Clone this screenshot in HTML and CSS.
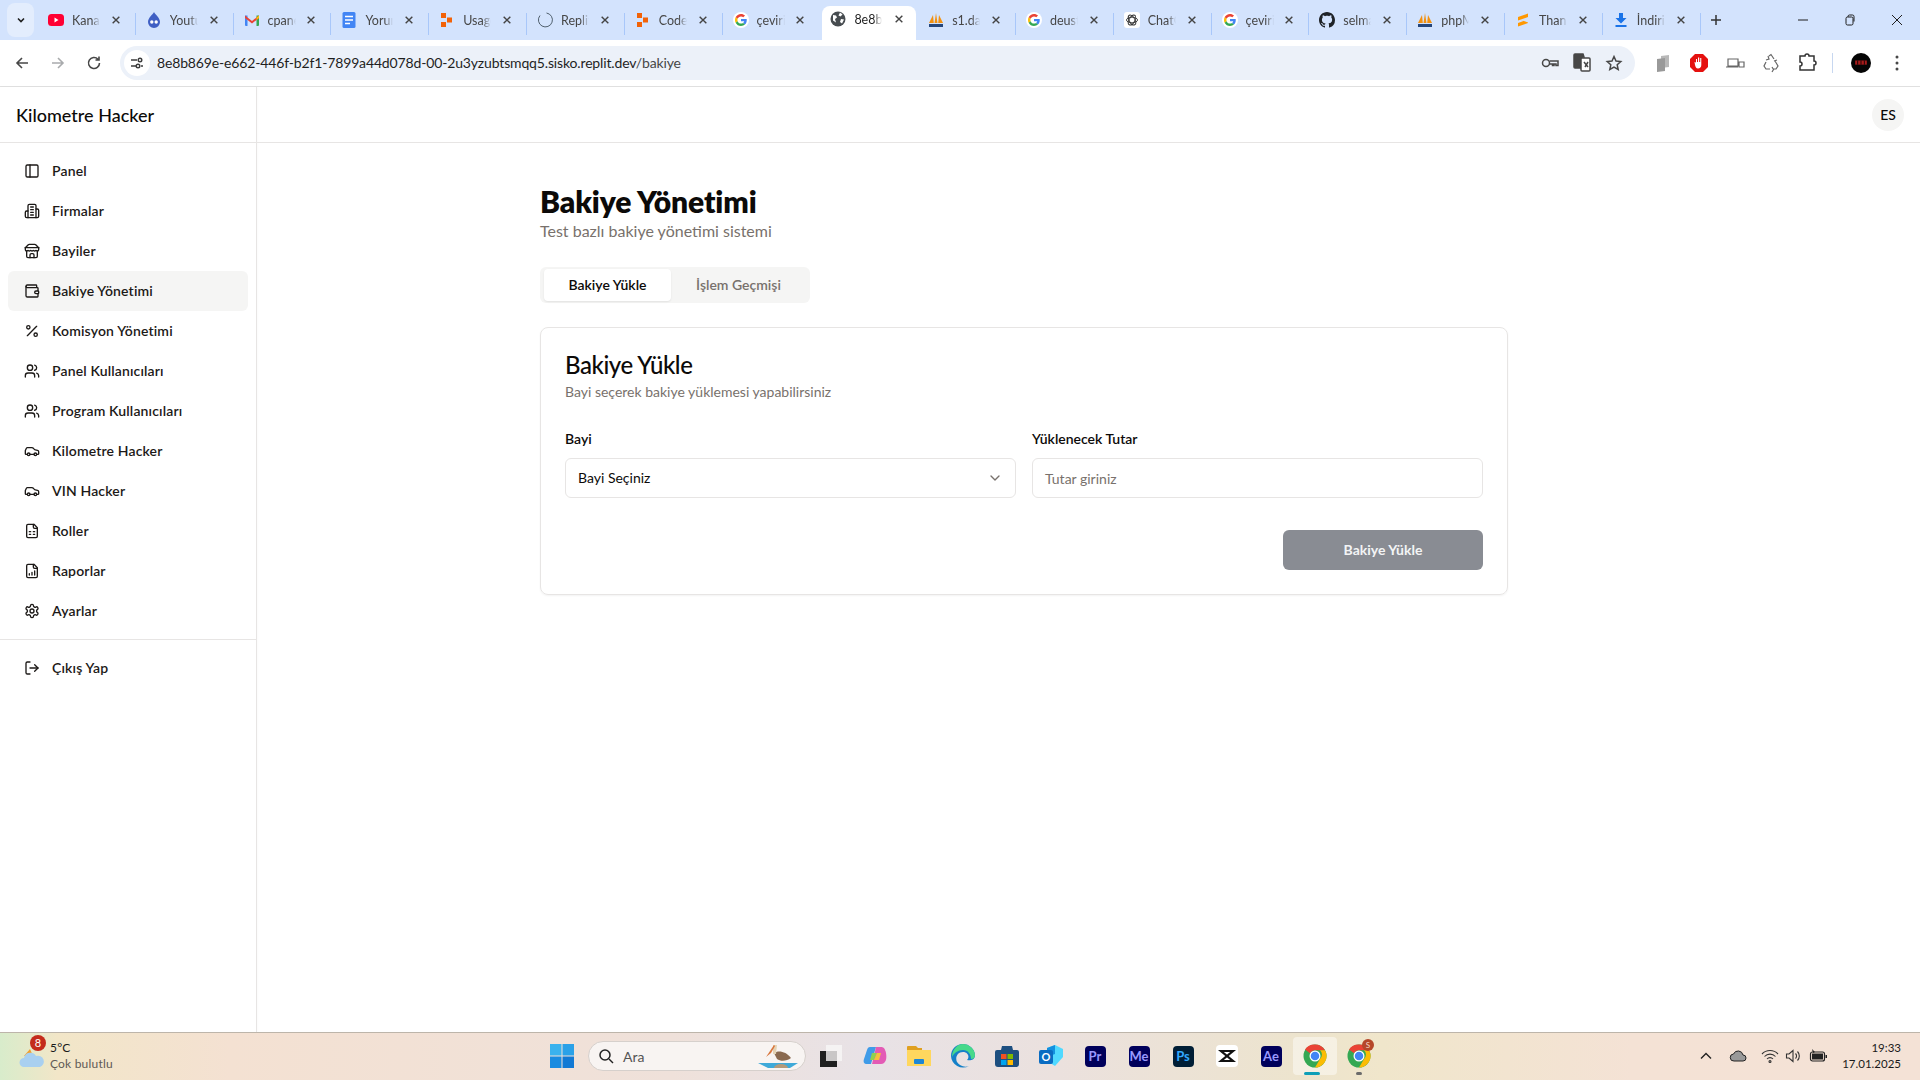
FILE: index.html
```html
<!DOCTYPE html>
<html lang="tr">
<head>
<meta charset="utf-8">
<title>Bakiye Yönetimi</title>
<link rel="stylesheet" href="styles.css">
</head>
<body>
<svg class="defs" width="0" height="0" aria-hidden="true">
  <symbol id="x" viewBox="0 0 12 12"><path d="M2 2l8 8M10 2l-8 8"/></symbol>
  <symbol id="g" viewBox="0 0 48 48">
    <path fill="#EA4335" d="M24 9.5c3.54 0 6.71 1.22 9.21 3.6l6.85-6.85C35.9 2.38 30.47 0 24 0 14.62 0 6.51 5.38 2.56 13.22l7.98 6.19C12.43 13.72 17.74 9.5 24 9.5z"/>
    <path fill="#4285F4" d="M46.98 24.55c0-1.57-.15-3.09-.38-4.55H24v9.02h12.94c-.58 2.96-2.26 5.48-4.78 7.18l7.73 6c4.51-4.18 7.09-10.36 7.09-17.65z"/>
    <path fill="#FBBC05" d="M10.53 28.59c-.5-1.45-.78-2.99-.78-4.59s.27-3.14.78-4.59l-7.98-6.19C.92 16.46 0 20.12 0 24c0 3.88.92 7.54 2.56 10.78l7.97-6.19z"/>
    <path fill="#34A853" d="M24 48c6.48 0 11.93-2.13 15.89-5.81l-7.73-6c-2.15 1.45-4.92 2.3-8.16 2.3-6.26 0-11.57-4.22-13.47-9.91l-7.98 6.19C6.51 42.62 14.62 48 24 48z"/>
  </symbol>
  <symbol id="squares" viewBox="0 0 16 16"><path fill="#f26207" d="M2 1h5v5H2zM2 10h5v5H2zM8 5.500h5v5H8z"/></symbol>
  <symbol id="pma" viewBox="0 0 16 16"><path fill="#f29111" d="M1 11L5 3l.8 8zM6.500 11L8 1l1.500 10zM10.200 11L11 3l4 8z"/><path fill="#25477d" d="M1 12h14v3H1z"/></symbol>
  <symbol id="chrome" viewBox="0 0 48 48">
    <circle cx="24" cy="24" r="23" fill="#34a853"/>
    <path fill="#ea4335" d="M24 1a23 23 0 0 1 20 11.500H24a11.500 11.500 0 0 0-10 5.750L4 11A23 23 0 0 1 24 1z"/>
    <path fill="#fbbc05" d="M44 12.500A23 23 0 0 1 24 47l10-17.250a11.500 11.500 0 0 0 0-17.250z"/>
    <circle cx="24" cy="24" r="11" fill="#fff"/><circle cx="24" cy="24" r="8.500" fill="#4285f4"/>
  </symbol>
  <symbol id="i-panel" viewBox="0 0 24 24"><rect x="3" y="3" width="18" height="18" rx="2"/><path d="M9 3v18"/></symbol>
  <symbol id="i-building" viewBox="0 0 24 24"><path d="M6 22V4a2 2 0 0 1 2-2h8a2 2 0 0 1 2 2v18Z"/><path d="M6 12H4a2 2 0 0 0-2 2v6a2 2 0 0 0 2 2h2"/><path d="M18 9h2a2 2 0 0 1 2 2v9a2 2 0 0 1-2 2h-2"/><path d="M10 6h4M10 10h4M10 14h4M10 18h4"/></symbol>
  <symbol id="i-store" viewBox="0 0 24 24"><path d="m2 7 4.410-4.410A2 2 0 0 1 7.830 2h8.340a2 2 0 0 1 1.420.590L22 7"/><path d="M4 12v8a2 2 0 0 0 2 2h12a2 2 0 0 0 2-2v-8"/><path d="M15 22v-4a2 2 0 0 0-2-2h-2a2 2 0 0 0-2 2v4"/><path d="M2 7h20"/><path d="M22 7v3a2 2 0 0 1-2 2 2.700 2.700 0 0 1-1.590-.630.700.700 0 0 0-.820 0A2.700 2.700 0 0 1 16 12a2.700 2.700 0 0 1-1.590-.630.700.700 0 0 0-.820 0A2.700 2.700 0 0 1 12 12a2.700 2.700 0 0 1-1.590-.630.700.700 0 0 0-.820 0A2.700 2.700 0 0 1 8 12a2.700 2.700 0 0 1-1.590-.630.700.700 0 0 0-.820 0A2.700 2.700 0 0 1 4 12a2 2 0 0 1-2-2V7"/></symbol>
  <symbol id="i-wallet" viewBox="0 0 24 24"><path d="M19 7V4a1 1 0 0 0-1-1H5a2 2 0 0 0 0 4h15a1 1 0 0 1 1 1v4h-3a2 2 0 0 0 0 4h3a1 1 0 0 0 1-1v-2a1 1 0 0 0-1-1"/><path d="M3 5v14a2 2 0 0 0 2 2h15a1 1 0 0 0 1-1v-4"/></symbol>
  <symbol id="i-percent" viewBox="0 0 24 24"><path d="M19 5 5 19"/><circle cx="6.500" cy="6.500" r="2.500"/><circle cx="17.500" cy="17.500" r="2.500"/></symbol>
  <symbol id="i-users" viewBox="0 0 24 24"><path d="M16 21v-2a4 4 0 0 0-4-4H6a4 4 0 0 0-4 4v2"/><circle cx="9" cy="7" r="4"/><path d="M22 21v-2a4 4 0 0 0-3-3.870"/><path d="M16 3.130a4 4 0 0 1 0 7.750"/></symbol>
  <symbol id="i-car" viewBox="0 0 24 24"><path d="M19 17h2c.600 0 1-.400 1-1v-3c0-.900-.700-1.700-1.500-1.900C18.700 10.600 16 10 16 10s-1.300-1.400-2.200-2.300c-.500-.400-1.100-.700-1.800-.700H5c-.600 0-1.100.400-1.400.900l-1.400 2.900A3.700 3.700 0 0 0 2 12v4c0 .600.400 1 1 1h2"/><circle cx="7" cy="17" r="2"/><path d="M9 17h6"/><circle cx="17" cy="17" r="2"/></symbol>
  <symbol id="i-filegrid" viewBox="0 0 24 24"><path d="M15 2H6a2 2 0 0 0-2 2v16a2 2 0 0 0 2 2h12a2 2 0 0 0 2-2V7Z"/><path d="M14 2v4a2 2 0 0 0 2 2h4"/><path d="M8 13h2M14 13h2M8 17h2M14 17h2"/></symbol>
  <symbol id="i-filebar" viewBox="0 0 24 24"><path d="M15 2H6a2 2 0 0 0-2 2v16a2 2 0 0 0 2 2h12a2 2 0 0 0 2-2V7Z"/><path d="M14 2v4a2 2 0 0 0 2 2h4"/><path d="M8 18v-2M12 18v-4M16 18v-6"/></symbol>
  <symbol id="i-gear" viewBox="0 0 24 24"><path d="M12.220 2h-.440a2 2 0 0 0-2 2v.180a2 2 0 0 1-1 1.730l-.430.250a2 2 0 0 1-2 0l-.150-.080a2 2 0 0 0-2.730.730l-.220.380a2 2 0 0 0 .730 2.730l.150.100a2 2 0 0 1 1 1.720v.510a2 2 0 0 1-1 1.740l-.150.090a2 2 0 0 0-.730 2.730l.220.380a2 2 0 0 0 2.730.730l.150-.080a2 2 0 0 1 2 0l.430.250a2 2 0 0 1 1 1.730V20a2 2 0 0 0 2 2h.440a2 2 0 0 0 2-2v-.180a2 2 0 0 1 1-1.730l.430-.250a2 2 0 0 1 2 0l.150.080a2 2 0 0 0 2.730-.730l.220-.390a2 2 0 0 0-.730-2.730l-.150-.080a2 2 0 0 1-1-1.740v-.500a2 2 0 0 1 1-1.740l.150-.090a2 2 0 0 0 .730-2.730l-.220-.380a2 2 0 0 0-2.730-.730l-.150.080a2 2 0 0 1-2 0l-.430-.250a2 2 0 0 1-1-1.730V4a2 2 0 0 0-2-2z"/><circle cx="12" cy="12" r="3"/></symbol>
  <symbol id="i-logout" viewBox="0 0 24 24"><path d="M9 21H5a2 2 0 0 1-2-2V5a2 2 0 0 1 2-2h4"/><path d="m16 17 5-5-5-5"/><path d="M21 12H9"/></symbol>
</svg>

<div class="tabstrip">
  <div class="tabs-btn"><svg class="tabs-chevron" viewBox="0 0 12 12"><path d="M3 4.500l3 3 3-3"/></svg></div>
  <div class="tab"><svg class="fav" viewBox="0 0 16 16"><rect y="2" width="16" height="12" rx="3.500" fill="#ff0033"/><path d="M6.500 5.500l4 2.500-4 2.500z" fill="#fff"/></svg><span class="tab-title">Kanal</span><svg class="tab-x"><use href="#x"/></svg></div>
  <div class="tab"><svg class="fav" viewBox="0 0 16 16"><path d="M8 0c1 2.500 6 5.500 6 10a6 6 0 0 1-12 0C2 5.500 7 2.500 8 0z" fill="#3f5fc4"/><circle cx="5.800" cy="10" r="1.700" fill="#fff"/><circle cx="10.200" cy="10" r="1.700" fill="#fff"/></svg><span class="tab-title">Youtube</span><svg class="tab-x"><use href="#x"/></svg></div>
  <div class="tab"><svg class="fav" viewBox="0 0 16 16"><path d="M1 3.500h2.500V14H2a1 1 0 0 1-1-1z" fill="#4285f4"/><path d="M12.500 3.500H15V13a1 1 0 0 1-1 1h-1.500z" fill="#34a853"/><path d="M1 3.500l7 5.500 7-5.500V6L8 11.500 1 6z" fill="#ea4335"/><path d="M12.500 5.500L15 3.500V6l-2.500 2z" fill="#fbbc05"/></svg><span class="tab-title">cpanel</span><svg class="tab-x"><use href="#x"/></svg></div>
  <div class="tab"><svg class="fav" viewBox="0 0 16 16"><rect x="1.500" width="13" height="16" rx="1.500" fill="#4285f4"/><path d="M4 4.500h8M4 8h8M4 11.500h5" stroke="#fff" stroke-width="1.500"/></svg><span class="tab-title">Yorum</span><svg class="tab-x"><use href="#x"/></svg></div>
  <div class="tab"><svg class="fav"><use href="#squares"/></svg><span class="tab-title">Usage</span><svg class="tab-x"><use href="#x"/></svg></div>
  <div class="tab"><svg class="fav" viewBox="0 0 16 16"><path d="M9.500 1A7 7 0 1 1 3 3.500" fill="none" stroke="#50606e" stroke-width="1"/></svg><span class="tab-title">Replit</span><svg class="tab-x"><use href="#x"/></svg></div>
  <div class="tab"><svg class="fav"><use href="#squares"/></svg><span class="tab-title">Code</span><svg class="tab-x"><use href="#x"/></svg></div>
  <div class="tab tab-pre"><span class="fav-wrap"><svg class="fav-g"><use href="#g"/></svg></span><span class="tab-title">çeviri</span><svg class="tab-x"><use href="#x"/></svg></div>
  <div class="tab tab-active"><svg class="fav" viewBox="0 0 16 16"><circle cx="8" cy="8" r="7.500" fill="#474c50"/><path d="M3 4l3 .500 1 2-2 1.500 1 3.500-3-2zM10 1.500l2.500 2-2 2-2-1zM11 8l3 .500-2 4-2-1.500z" fill="#fff"/></svg><span class="tab-title">8e8b869e</span><svg class="tab-x"><use href="#x"/></svg></div>
  <div class="tab"><svg class="fav"><use href="#pma"/></svg><span class="tab-title">s1.daily</span><svg class="tab-x"><use href="#x"/></svg></div>
  <div class="tab"><span class="fav-wrap"><svg class="fav-g"><use href="#g"/></svg></span><span class="tab-title">deusto</span><svg class="tab-x"><use href="#x"/></svg></div>
  <div class="tab"><svg class="fav" viewBox="0 0 16 16"><rect width="16" height="16" rx="3" fill="#fff"/><g fill="none" stroke="#333" stroke-width=".9"><ellipse cx="8" cy="8" rx="5.500" ry="2.800"/><ellipse cx="8" cy="8" rx="5.500" ry="2.800" transform="rotate(60 8 8)"/><ellipse cx="8" cy="8" rx="5.500" ry="2.800" transform="rotate(120 8 8)"/></g></svg><span class="tab-title">ChatGPT</span><svg class="tab-x"><use href="#x"/></svg></div>
  <div class="tab"><span class="fav-wrap"><svg class="fav-g"><use href="#g"/></svg></span><span class="tab-title">çeviri</span><svg class="tab-x"><use href="#x"/></svg></div>
  <div class="tab"><svg class="fav" viewBox="0 0 16 16"><path fill="#1f2328" d="M8 0C3.580 0 0 3.580 0 8c0 3.540 2.290 6.530 5.470 7.590.400.070.550-.170.550-.380 0-.190-.010-.820-.010-1.490-2.010.370-2.530-.490-2.690-.940-.090-.230-.480-.940-.820-1.130-.280-.150-.680-.520-.010-.530.630-.010 1.080.580 1.230.820.720 1.210 1.870.870 2.330.660.070-.520.280-.870.510-1.070-1.780-.200-3.640-.890-3.640-3.950 0-.870.310-1.590.820-2.150-.080-.200-.360-1.020.080-2.120 0 0 .670-.210 2.200.820.640-.180 1.320-.270 2-.270s1.360.090 2 .270c1.530-1.040 2.200-.820 2.200-.820.440 1.100.160 1.920.080 2.120.510.560.820 1.270.820 2.150 0 3.070-1.870 3.750-3.650 3.950.290.250.540.730.540 1.480 0 1.070-.010 1.930-.010 2.200 0 .210.150.460.550.380A8.010 8.010 0 0 0 16 8c0-4.420-3.580-8-8-8z"/></svg><span class="tab-title">selman</span><svg class="tab-x"><use href="#x"/></svg></div>
  <div class="tab"><svg class="fav"><use href="#pma"/></svg><span class="tab-title">phpMyAdmin</span><svg class="tab-x"><use href="#x"/></svg></div>
  <div class="tab"><svg class="fav" viewBox="0 0 16 16"><path d="M3 5L13 1.500v3.500L3 8.500zM3 7L13 10.500V11L3 14.500V11L8.500 9 3 7z" fill="#ff9800"/></svg><span class="tab-title">Thank you</span><svg class="tab-x"><use href="#x"/></svg></div>
  <div class="tab"><svg class="fav" viewBox="0 0 16 16"><path d="M6 1h4v5h3.500L8 11.500 2.500 6H6zM2.500 13h11v2h-11z" fill="#1a73e8"/></svg><span class="tab-title">İndirilenler</span><svg class="tab-x"><use href="#x"/></svg></div>
  <svg class="newtab" viewBox="0 0 12 12"><path d="M6 1v10M1 6h10"/></svg>
  <div class="winctl">
    <svg class="win" viewBox="0 0 12 12"><path d="M1 6h10"/></svg>
    <svg class="win" viewBox="0 0 12 12"><rect x="2" y="3" width="7" height="8" rx="1.500"/><path d="M4 3V2.500A1.500 1.500 0 0 1 5.500 1h3A1.500 1.500 0 0 1 10 2.500v5"/></svg>
    <svg class="win" viewBox="0 0 12 12"><path d="M1 1l10 10M11 1L1 11"/></svg>
  </div>
</div>

<div class="toolbar">
  <svg class="nav-ico" viewBox="0 0 16 16"><path d="M14 8H3M8 3L3 8l5 5"/></svg>
  <svg class="nav-ico nav-dim" viewBox="0 0 16 16"><path d="M2 8h11M8 3l5 5-5 5"/></svg>
  <svg class="nav-ico" viewBox="0 0 16 16"><path d="M13.500 8A5.500 5.500 0 1 1 12 4.200M13 1.500V5H9.500"/></svg>
  <div class="omnibox">
    <span class="site-info"><svg viewBox="0 0 16 16"><path d="M2 5h6M12 11h2M2 11h5"/><circle cx="11" cy="5" r="1.800"/><circle cx="9" cy="11" r="1.800"/></svg></span>
    <span class="url">8e8b869e-e662-446f-b2f1-7899a44d078d-00-2u3yzubtsmqq5.sisko.replit.dev<span class="url-path">/bakiye</span></span>
    <span class="omni-right">
      <svg class="omni-ico" viewBox="0 0 20 20"><circle cx="6" cy="10" r="3.500"/><path d="M9.500 8h8.500v4.500h-2V11h-2v1.500h-1.500V11H9.500"/></svg>
      <svg class="omni-ico" viewBox="0 0 20 20"><path class="fill-dark" d="M3 1h8l1 3h-2v11H3a1 1 0 0 1-1-1V2a1 1 0 0 1 1-1z"/><rect x="9" y="5" width="9" height="13" rx="1" fill="#fff"/><path d="M12 9l4 5M16 9l-3 5"/></svg>
      <svg class="omni-ico" viewBox="0 0 20 20"><path d="M10 3.500l2 4.500 4.800.500-3.600 3.300 1 4.700-4.200-2.400-4.200 2.400 1-4.700-3.600-3.300 4.800-.500z"/></svg>
    </span>
  </div>
  <div class="ext">
    <svg class="ext-ico" viewBox="0 0 20 20"><path fill="#b8b8b8" d="M8 3l8-1v12l-8 1z"/><path fill="#999" d="M4 6l8-1v13l-8 1z"/></svg>
    <svg class="ext-ico" viewBox="0 0 20 20"><path fill="#e5110f" d="M6 1h8l5 5v8l-5 5H6l-5-5V6z"/><path fill="#fff" d="M7 6h1v3h1V4.500h1.200V9h1V5h1.100v7c0 2-1.300 3.500-3.300 3.500-2 0-2.300-1.200-3-3.500L5.500 9l1.500.500z"/></svg>
    <svg class="ext-ico ext-line" viewBox="0 0 20 20"><path d="M3 13V6h10v7zM1 14h12M14 9h5v5h-5z"/></svg>
    <svg class="ext-ico ext-line" viewBox="0 0 20 20"><path d="M8 3l2-1.500L13 6M14 8l3 5-2 3h-3M9 16H5l-2-3 2-4M11 14l1.500 2.500L11 19M5 7l3-1-1-3M16 7l-3 1"/></svg>
    <svg class="ext-ico ext-line2" viewBox="0 0 20 20"><path d="M3 3h5a2 2 0 0 1 4 0h5v5a2 2 0 0 1 0 4v5H3v-4a2 2 0 0 0 0-4z"/></svg>
    <span class="ext-sep"></span>
    <span class="avatar"><svg viewBox="0 0 24 24"><rect x="5" y="9" width="14" height="5" fill="#a81b1b"/><path d="M8 9v5M12 9v5M16 9v5" stroke="#000"/></svg></span>
    <svg class="dots" viewBox="0 0 4 16"><circle cx="2" cy="2" r="1.500"/><circle cx="2" cy="8" r="1.500"/><circle cx="2" cy="14" r="1.500"/></svg>
  </div>
</div>

<div class="app">
  <aside class="sidebar">
    <div class="brand">Kilometre Hacker</div>
    <nav class="nav">
      <a class="nav-item"><svg class="lu"><use href="#i-panel"/></svg><span class="nav-label">Panel</span></a>
      <a class="nav-item"><svg class="lu"><use href="#i-building"/></svg><span class="nav-label">Firmalar</span></a>
      <a class="nav-item"><svg class="lu"><use href="#i-store"/></svg><span class="nav-label">Bayiler</span></a>
      <a class="nav-item nav-active"><svg class="lu"><use href="#i-wallet"/></svg><span class="nav-label">Bakiye Yönetimi</span></a>
      <a class="nav-item"><svg class="lu"><use href="#i-percent"/></svg><span class="nav-label">Komisyon Yönetimi</span></a>
      <a class="nav-item"><svg class="lu"><use href="#i-users"/></svg><span class="nav-label">Panel Kullanıcıları</span></a>
      <a class="nav-item"><svg class="lu"><use href="#i-users"/></svg><span class="nav-label">Program Kullanıcıları</span></a>
      <a class="nav-item"><svg class="lu"><use href="#i-car"/></svg><span class="nav-label">Kilometre Hacker</span></a>
      <a class="nav-item"><svg class="lu"><use href="#i-car"/></svg><span class="nav-label">VIN Hacker</span></a>
      <a class="nav-item"><svg class="lu"><use href="#i-filegrid"/></svg><span class="nav-label">Roller</span></a>
      <a class="nav-item"><svg class="lu"><use href="#i-filebar"/></svg><span class="nav-label">Raporlar</span></a>
      <a class="nav-item"><svg class="lu"><use href="#i-gear"/></svg><span class="nav-label">Ayarlar</span></a>
    </nav>
    <div class="nav nav-foot">
      <a class="nav-item"><svg class="lu"><use href="#i-logout"/></svg><span class="nav-label">Çıkış Yap</span></a>
    </div>
  </aside>
  <div class="main">
    <header class="topbar"><span class="es">ES</span></header>
    <main class="content">
      <h1 class="title">Bakiye Yönetimi</h1>
      <p class="subtitle">Test bazlı bakiye yönetimi sistemi</p>
      <div class="seg">
        <span class="seg-item seg-on">Bakiye Yükle</span>
        <span class="seg-item">İşlem Geçmişi</span>
      </div>
      <section class="card">
        <h2 class="card-title">Bakiye Yükle</h2>
        <p class="card-desc">Bayi seçerek bakiye yüklemesi yapabilirsiniz</p>
        <div class="fields">
          <div class="field">
            <label class="label">Bayi</label>
            <div class="control"><span class="control-text">Bayi Seçiniz</span><svg class="chev" viewBox="0 0 24 24"><path d="m6 9 6 6 6-6"/></svg></div>
          </div>
          <div class="field">
            <label class="label">Yüklenecek Tutar</label>
            <div class="control control-ph">Tutar giriniz</div>
          </div>
        </div>
        <div class="actions"><button class="submit">Bakiye Yükle</button></div>
      </section>
    </main>
  </div>
</div>

<footer class="taskbar">
  <div class="weather">
    <span class="w-ico">
      <svg viewBox="0 0 28 24" width="28" height="24"><path d="M6 10l6-7 3 7z" fill="#f0a030"/><path d="M6 21a4.500 4.500 0 0 1 0-9 6.500 6.500 0 0 1 12-2 5.500 5.500 0 0 1 4 11z" fill="#a9d0f0"/></svg>
      <span class="w-badge">8</span>
    </span>
    <span class="w-text"><span class="w-temp">5°C</span><span class="w-desc">Çok bulutlu</span></span>
  </div>
  <div class="dock">
    <svg class="start" viewBox="0 0 24 24"><path fill="#3ab2ee" d="M0 0h11.500v11.500H0z"/><path fill="#2aa1e8" d="M12.500 0H24v11.500H12.500z"/><path fill="#1a8be0" d="M0 12.500h11.500V24H0z"/><path fill="#1279d4" d="M12.500 12.500H24V24H12.500z"/></svg>
    <div class="search">
      <svg class="search-ico" viewBox="0 0 16 16"><circle cx="7" cy="7" r="5"/><path d="M11 11l4 4"/></svg>
      <span>Ara</span>
      <svg class="pelican" viewBox="0 0 40 28"><path d="M0 21h40l-8 5H10z" fill="#3fa9d8"/><path d="M16 26a7 4 0 0 1 14 0z" fill="#b39a7a"/><path d="M16 11c4-3 12-2 17 5-4 3-10 4-14 1z" fill="#8a6a50"/><path d="M15 3h4l-1 9h-3z" fill="#e4d3b5"/><path d="M16 3L8 15l5-4 4-7z" fill="#d9763d"/></svg>
    </div>
    <span class="slot"><svg class="app-ico" viewBox="0 0 24 24"><rect x="7" y="1" width="16" height="16" fill="#f5f3f3"/><rect x="1" y="7" width="17" height="16" fill="#1f1f1f"/><rect x="7" y="7" width="11" height="10" fill="#c9c7c7"/></svg></span>
    <span class="slot"><svg class="app-ico" viewBox="0 0 24 24"><path fill="#3f9be8" d="M7 3h6L8 20H4c-3 0-4-2-3-5l3-9c.5-2 1.500-3 3-3z"/><path fill="#e35bb5" d="M13 3h5c3 0 4 2 5 6 1 5 0 11-5 11H9z"/><path fill="#8fd14f" d="M9 9h5l-3 7H7z"/><path fill="#f5c23c" d="M14 9h4l-2 7h-5z"/></svg></span>
    <span class="slot"><svg class="app-ico" viewBox="0 0 24 24"><path fill="#e0a020" d="M0 3a1 1 0 0 1 1-1h8l2 2h4v3H0z"/><path fill="#ffd75e" d="M0 6h24v16H0z"/><rect x="7" y="15" width="10" height="5" rx="1" fill="#1d87d6"/></svg></span>
    <span class="slot"><svg class="app-ico" viewBox="0 0 24 24"><path fill="#1580c8" d="M12 0a12 12 0 0 1 12 11c0 5-5 6-8 5 3-3 1-8-4-8-6 0-8 6-6 10 2 3 7 6 12 4a12 12 0 0 1-18-10C0 5 5 0 12 0z"/><path fill="#47d98a" d="M12 0a12 12 0 0 1 12 11c0 3-2 4-4 4 0-5-3-9-8-9-5 0-9 3-11 7 0-7 5-13 11-13z"/></svg></span>
    <span class="slot"><svg class="app-ico" viewBox="0 0 24 24"><path fill="#1d4f80" d="M7 2h10l1 4h4a2 2 0 0 1 2 2v12a3 3 0 0 1-3 3H3a3 3 0 0 1-3-3V8a2 2 0 0 1 2-2h4z"/><path fill="#f25022" d="M6 10h5.500v5H6z"/><path fill="#7fba00" d="M12.500 10H18v5h-5.500z"/><path fill="#00a4ef" d="M6 16h5.500v5H6z"/><path fill="#ffb900" d="M12.500 16H18v5h-5.500z"/></svg></span>
    <span class="slot"><svg class="app-ico" viewBox="0 0 24 24"><path fill="#50d9ff" d="M8 4l8-3 8 4v8l-8 9-8-5z"/><path fill="#1490df" d="M8 4l8-3v9l-8 3z"/><rect y="6" width="14" height="14" rx="2" fill="#0a6cc2"/><text x="7" y="17" class="o-text">O</text></svg></span>
    <span class="slot"><span class="adobe adobe-pr">Pr</span></span>
    <span class="slot"><span class="adobe adobe-me">Me</span></span>
    <span class="slot"><span class="adobe adobe-ps">Ps</span></span>
    <span class="slot"><svg class="app-ico" viewBox="0 0 24 24"><rect x="1" y="1" width="22" height="22" rx="4" fill="#fff"/><path d="M6 7h12l-12 10h12z M6 7l12 10M18 7L6 17" fill="none" stroke="#111" stroke-width="2.200"/></svg></span>
    <span class="slot"><span class="adobe adobe-ae">Ae</span></span>
    <span class="slot slot-on"><svg class="chrome-ico"><use href="#chrome"/></svg><span class="run run-on"></span></span>
    <span class="slot"><svg class="chrome-ico"><use href="#chrome"/></svg><span class="chrome-s">S</span><span class="run"></span></span>
  </div>
  <div class="tray">
    <svg class="tray-ico tray-chev" viewBox="0 0 16 16"><path d="M3 10.500l5-5 5 5"/></svg>
    <svg class="tray-ico tray-cloud" viewBox="0 0 18 16"><path d="M5 13a3.500 3.500 0 0 1-.500-7A5 5 0 0 1 14 7a3 3 0 0 1 0 6z"/></svg>
    <svg class="tray-ico tray-wifi" viewBox="0 0 18 16"><path d="M1 6a11 11 0 0 1 16 0M3.500 8.500a7.500 7.500 0 0 1 11 0M6 11a4 4 0 0 1 6 0"/><circle cx="9" cy="13.500" r="1" /></svg>
    <svg class="tray-ico tray-vol" viewBox="0 0 18 16"><path d="M1.500 6v4h2.500L8 13.500v-11L4 6zM10.500 5.500a3.500 3.500 0 0 1 0 5M12.500 3.500a6.500 6.500 0 0 1 0 9"/></svg>
    <svg class="tray-ico tray-bat" viewBox="0 0 20 16"><rect x="1.500" y="4" width="14" height="9" rx="2"/><path class="bat-fill" d="M3 5.500h11v6H3zM16.500 7H18v3h-1.500zM3 1l3 3-2 1z"/></svg>
    <div class="clock"><span>19:33</span><span>17.01.2025</span></div>
  </div>
</footer>
</body>
</html>
```

FILE: styles.css
```css
* { box-sizing: border-box; }
html, body { margin: 0; padding: 0; }
body {
  width: 1920px;
  height: 1080px;
  overflow: hidden;
  display: flex;
  flex-direction: column;
  background: #fff;
  color: #0c0a09;
  font-family: Lato, "Noto Sans", sans-serif;
}
.defs { position: absolute; }

/* browser tab strip */
.tabstrip {
  height: 40px;
  flex: none;
  display: flex;
  align-items: flex-end;
  background: #d3e3fd;
  padding-left: 7px;
}
.tabs-btn {
  width: 27px;
  height: 34px;
  margin: 0 4px 0 0;
  align-self: center;
  border-radius: 8px;
  background: #e3edfd;
  display: flex;
  align-items: center;
  justify-content: center;
}
.tabs-chevron { width: 12px; height: 12px; fill: none; stroke: #1f1f1f; stroke-width: 1.600; }
.tab {
  width: 97.800px;
  height: 32px;
  margin-bottom: 0;
  padding: 0 11px 8px 10px;
  display: flex;
  align-items: center;
  position: relative;
  border-right: 1.500px solid #a8c7fa;
  border-image: linear-gradient(transparent 6px, #a8c7fa 6px, #a8c7fa 26px, transparent 26px) 1;
  font-size: 12.500px;
  color: #474747;
}
.tab-pre { border-image: none; border-right-color: transparent; }
.tab-active {
  width: 93.800px;
  margin: 0 2px;
  padding: 0 9px 8px 8px;
  height: 34px;
  background: #fff;
  border: 0;
  border-radius: 8px 8px 0 0;
  color: #1f1f1f;
}
.tab-active + .tab { border-image: linear-gradient(transparent 6px, #a8c7fa 6px, #a8c7fa 26px, transparent 26px) 1; }
.fav { width: 16px; height: 16px; flex: none; }
.fav-wrap { width: 16px; height: 16px; flex: none; background: #fff; border-radius: 50%; display: flex; align-items: center; justify-content: center; }
.fav-g { width: 12px; height: 12px; }
.tab-title {
  width: 28px;
  margin-left: 8px;
  flex: none;
  overflow: hidden;
  white-space: nowrap;
  -webkit-mask-image: linear-gradient(90deg, #000 70%, transparent);
  mask-image: linear-gradient(90deg, #000 70%, transparent);
}
.tab-x { width: 10px; height: 10px; margin-left: auto; margin-right: 3px; fill: none; stroke: #444; stroke-width: 1.700; flex: none; }
.newtab { width: 12px; height: 12px; margin: 0 0 14px 9px; fill: none; stroke: #333; stroke-width: 1.500; flex: none; }
.winctl { margin-left: auto; height: 40px; display: flex; align-items: center; padding-right: 17px; gap: 35px; }
.win { width: 12px; height: 12px; fill: none; stroke: #1f1f1f; stroke-width: 1; }

/* toolbar */
.toolbar {
  height: 47px;
  flex: none;
  display: flex;
  align-items: center;
  background: #fff;
  border-bottom: 1px solid #e0e0e0;
  border-radius: 8px 8px 0 0;
  padding: 0 0 1px 14px;
  margin-top: 0;
}
.nav-ico { width: 16px; height: 16px; margin-right: 20px; fill: none; stroke: #474747; stroke-width: 1.600; flex: none; }
.nav-dim { stroke: #a9abad; }
.omnibox {
  width: 1515px;
  height: 34px;
  margin-left: -2px;
  flex: none;
  background: #ecf1f9;
  border-radius: 17px;
  display: flex;
  align-items: center;
  padding: 0 0 0 4px;
  font-size: 14px;
}
.site-info { width: 26px; height: 26px; border-radius: 50%; background: #fff; display: flex; align-items: center; justify-content: center; flex: none; }
.site-info svg { width: 16px; height: 16px; fill: none; stroke: #3c3c3c; stroke-width: 1.400; }
.url { margin-left: 7px; color: #1f1f1f; white-space: nowrap; font-size: 14px; letter-spacing: -.15px; }
.url-path { color: #474747; }
.omni-right { margin-left: auto; display: flex; align-items: center; gap: 12px; padding-right: 11px; }
.omni-ico { width: 20px; height: 20px; fill: none; stroke: #474747; stroke-width: 1.500; }
.fill-dark { fill: #474747; }
.ext { display: flex; align-items: center; margin-left: 18px; flex: 1; }
.ext-ico { width: 20px; height: 20px; margin-right: 16px; flex: none; }
.ext-line { fill: none; stroke: #666; stroke-width: 1.200; }
.ext-line2 { fill: none; stroke: #333; stroke-width: 1.500; }
.ext-sep { width: 1px; height: 20px; background: #c7d7f0; margin: 0 5px 0 -1px; flex: none; }
.avatar { width: 20px; height: 20px; border-radius: 50%; background: #050505; margin-left: 13px; display: block; overflow: hidden; flex: none; }
.avatar svg { width: 20px; height: 20px; display: block; }
.dots { width: 4px; height: 16px; margin-left: 24px; fill: #474747; flex: none; }

/* app */
.app { flex: 1; display: flex; min-height: 0; }
.sidebar { width: 257px; flex: none; border-right: 1px solid #e7e5e4; display: flex; flex-direction: column; box-shadow: 1px 0 2px rgba(0,0,0,.02); }
.brand {
  height: 56px;
  flex: none;
  border-bottom: 1px solid #e7e5e4;
  padding: 0 16px;
  display: flex;
  align-items: center;
  font-size: 18px;
  font-weight: 500;
  color: #0c0a09;
}
.nav { padding: 8px; display: flex; flex-direction: column; }
.nav-foot { border-top: 1px solid #e7e5e4; }
.nav-item {
  height: 40px;
  display: flex;
  align-items: center;
  gap: 12px;
  padding: 0 16px;
  font-size: 14px;
  font-weight: 600;
  letter-spacing: .15px;
  color: #1c1917;
  border-radius: 6px;
}
.nav-label { margin-top: -2px; }
.nav-active { background: #f5f5f4; }
.lu { width: 16px; height: 16px; flex: none; fill: none; stroke: #1c1917; stroke-width: 2; stroke-linecap: round; stroke-linejoin: round; }

.main { flex: 1; min-width: 0; display: flex; flex-direction: column; }
.topbar { height: 56px; flex: none; border-bottom: 1px solid #e7e5e4; display: flex; align-items: center; justify-content: flex-end; padding-right: 16px; }
.es { width: 32px; height: 32px; border-radius: 50%; background: #f5f5f4; display: flex; align-items: center; justify-content: center; font-size: 14px; font-weight: 500; }
.content { width: 968px; margin-left: 283px; padding-top: 40px; }
.title { margin: 0; font-size: 30px; line-height: 36px; font-weight: 800; letter-spacing: -.1px; color: #0c0a09; }
.subtitle { margin: 0; font-size: 16px; line-height: 24px; color: #78716c; }
.seg { margin-top: 24px; width: 270px; height: 36px; background: #f5f5f4; border-radius: 6px; display: flex; align-items: center; padding: 0 4px; }
.seg-item { height: 32px; padding-bottom: 2px; display: flex; align-items: center; justify-content: center; font-size: 14px; font-weight: 600; color: #78716c; flex: 1; }
.seg-on { width: 127px; flex: none; background: #fff; color: #0c0a09; border-radius: 4px; box-shadow: 0 1px 2px rgba(0,0,0,.08); }
.card { margin-top: 24px; border: 1px solid #e7e5e4; border-radius: 8px; padding: 22px 24px 24px; box-shadow: 0 1px 2px rgba(0,0,0,.05); }
.card-title { margin: -1px 0 1px; font-size: 24px; line-height: 32px; font-weight: 500; letter-spacing: -.45px; color: #0c0a09; }
.card-desc { margin: 0; font-size: 14px; line-height: 20px; color: #78716c; }
.fields { margin-top: 27px; display: grid; grid-template-columns: 1fr 1fr; gap: 16px; }
.field { display: flex; flex-direction: column; gap: 9px; }
.label { font-size: 14px; line-height: 20px; font-weight: 600; color: #0c0a09; }
.control { height: 40px; border: 1px solid #e7e5e4; border-radius: 6px; padding: 0 12px; display: flex; align-items: center; justify-content: space-between; font-size: 14px; color: #0c0a09; }
.control-text { margin-top: -2px; }
.control-ph { color: #78716c; }
.chev { width: 16px; height: 16px; fill: none; stroke: #78716c; stroke-width: 2; stroke-linecap: round; stroke-linejoin: round; }
.actions { margin-top: 32px; display: flex; justify-content: flex-end; }
.submit { width: 200px; height: 40px; padding: 0 0 2px; border: 0; border-radius: 6px; background: #898c93; color: #f3f4f5; font: inherit; font-size: 14px; font-weight: 700; }

/* windows taskbar */
.taskbar {
  height: 48px;
  flex: none;
  display: flex;
  align-items: center;
  padding-bottom: 1px;
  border-top: 1px solid #bdb5aa;
  background: linear-gradient(90deg, #d8eccb 0%, #f2e6c8 3%, #f4e1d2 12%, #efe1da 35%, #e8e2e6 45%, #ebe1de 55%, #ede4cd 68%, #f0e6cb 72%, #f4e2d5 85%, #f4e2d6 100%);
}
.weather { width: 220px; padding-left: 18px; display: flex; align-items: center; flex: none; }
.w-ico { position: relative; width: 28px; height: 24px; flex: none; margin-top: 4px; }
.w-badge { position: absolute; top: -11px; left: 12px; width: 16px; height: 16px; border-radius: 50%; background: #c42b1c; color: #fff; font-size: 11px; line-height: 16px; text-align: center; }
.w-text { margin-left: 4px; display: flex; flex-direction: column; font-size: 12px; line-height: 16px; letter-spacing: .2px; }
.w-temp { color: #1a1a1a; }
.w-desc { color: #5f5a56; }
.dock { display: flex; align-items: center; flex: none; margin-left: 330px; }
.start { width: 24px; height: 24px; flex: none; }
.search {
  width: 218px;
  height: 30px;
  margin-left: 14px;
  margin-right: 3px;
  background: #f8f4f2;
  border: 1px solid #d6d0cc;
  border-radius: 15px;
  display: flex;
  align-items: center;
  padding-left: 9px;
  font-size: 14px;
  color: #555;
  flex: none;
}
.search span { margin-left: 9px; }
.search-ico { width: 16px; height: 16px; fill: none; stroke: #222; stroke-width: 1.500; flex: none; }
.pelican { width: 40px; height: 28px; margin-left: auto; margin-right: 7px; flex: none; }
.slot { width: 44px; height: 38px; display: flex; align-items: center; justify-content: center; position: relative; flex: none; border-radius: 4px; }
.slot-on { background: rgba(255,255,255,.45); }
.app-ico { width: 24px; height: 24px; }
.o-text { fill: #fff; font-size: 11px; font-weight: 700; text-anchor: middle; }
.adobe { width: 21px; height: 21px; border-radius: 4px; display: flex; align-items: center; justify-content: center; font-size: 13px; font-weight: 700; }
.adobe-pr { background: #00005b; color: #9999ff; }
.adobe-me { background: #00005b; color: #9999ff; }
.adobe-ae { background: #00005b; color: #9999ff; }
.adobe-ps { background: #001e36; color: #31a8ff; }
.chrome-ico { width: 24px; height: 24px; }
.chrome-s { position: absolute; top: 2px; right: 7px; width: 12px; height: 12px; border-radius: 50%; background: #b5472a; color: #f4d8c8; font-size: 8px; line-height: 12px; text-align: center; }
.run { position: absolute; bottom: 0; left: 19px; width: 6px; height: 3px; border-radius: 2px; background: #6b6b6b; }
.run-on { left: 11px; width: 16px; background: #0e9fb7; }
.tray { margin-left: auto; display: flex; align-items: center; padding-right: 19px; flex: none; }
.tray-ico { height: 16px; flex: none; }
.tray-chev { width: 16px; fill: none; stroke: #222; stroke-width: 1.400; }
.tray-cloud { width: 18px; margin-left: 15px; fill: #999; stroke: #222; stroke-width: 1; }
.tray-wifi { width: 18px; margin-left: 14px; fill: none; stroke: #333; stroke-width: 1.100; }
.tray-vol { width: 18px; margin-left: 6px; fill: none; stroke: #333; stroke-width: 1.100; }
.tray-bat { width: 20px; margin-left: 6px; fill: none; stroke: #222; stroke-width: 1.200; }
.bat-fill { fill: #222; stroke: none; }
.clock { margin-left: 13px; display: flex; flex-direction: column; align-items: flex-end; font-size: 11.500px; line-height: 16px; color: #1a1a1a; }
```
